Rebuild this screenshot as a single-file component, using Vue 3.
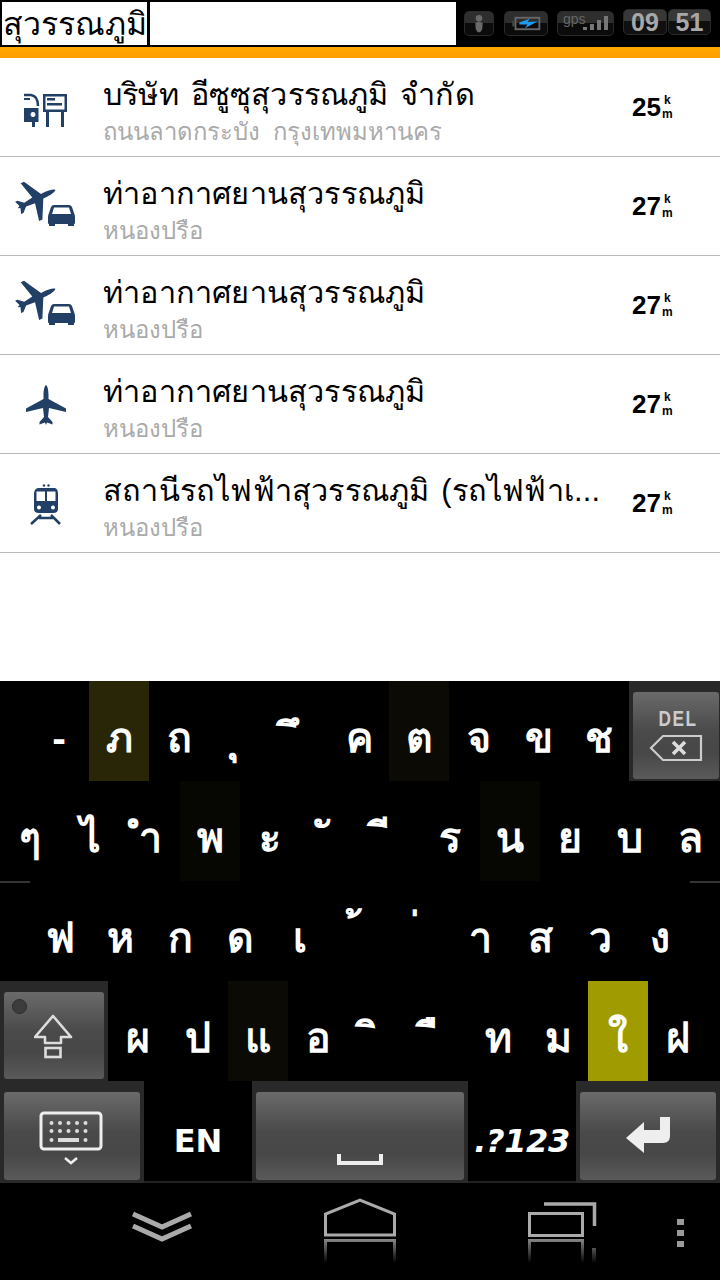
<script setup>
const rows = [
  { icon: "station", name: "บริษัท อีซูซุสุวรรณภูมิ จำกัด", sub: "ถนนลาดกระบัง  กรุงเทพมหานคร", dist: "25" },
  { icon: "planecar", name: "ท่าอากาศยานสุวรรณภูมิ", sub: "หนองปรือ", dist: "27" },
  { icon: "planecar", name: "ท่าอากาศยานสุวรรณภูมิ", sub: "หนองปรือ", dist: "27" },
  { icon: "plane", name: "ท่าอากาศยานสุวรรณภูมิ", sub: "หนองปรือ", dist: "27" },
  { icon: "train", name: "สถานีรถไฟฟ้าสุวรรณภูมิ (รถไฟฟ้าเ...", sub: "หนองปรือ", dist: "27" },
];

const planePath =
  "M0,-20 C1.5,-19 2.5,-15 2.5,-10 L2.5,-6 L20,3.5 L20,7 L3,3 L2,12 L6.5,17 L6.5,19.5 L1,17.5 L0,20 L-1,17.5 L-6.5,19.5 L-6.5,17 L-2,12 L-3,3 L-20,7 L-20,3.5 L-2.5,-6 L-2.5,-10 C-2.5,-15 -1.5,-19 0,-20 Z";

// combining marks have no advance of their own, so pad them with nbsp
const mark = (t) => `\u00a0${t}\u00a0`;

const row1 = [
  { t: "-" }, { t: "ภ", c: "hl-a" }, { t: "ถ" }, { t: mark("ุ") }, { t: mark("ึ") },
  { t: "ค" }, { t: "ต", c: "hl-b" }, { t: "จ" }, { t: "ข" }, { t: "ช" },
];
const row2 = [
  { t: "ๆ" }, { t: "ไ" }, { t: "ำ" }, { t: "พ", c: "hl-c" }, { t: "ะ" }, { t: mark("ั") },
  { t: mark("ี") }, { t: "ร" }, { t: "น", c: "hl-c" }, { t: "ย" }, { t: "บ" }, { t: "ล" },
];
const row3 = ["ฟ", "ห", "ก", "ด", "เ", mark("้"), mark("่"), "า", "ส", "ว", "ง"].map((t) => ({ t }));
const row4 = [
  { t: "ผ" }, { t: "ป" }, { t: "แ", c: "hl-b" }, { t: "อ" }, { t: mark("ิ") },
  { t: mark("ื") }, { t: "ท" }, { t: "ม" }, { t: "ใ", c: "hl-d" }, { t: "ฝ" },
];
</script>

<template>
  <div class="page">
    <div class="top">
      <div class="search">สุวรรณภูมิ<span class="caret"></span></div>
      <div class="status">
        <div class="sbox person">
          <svg width="30" height="25" viewBox="0 0 30 25">
            <circle cx="15" cy="7" r="3.5" fill="#6a6a6a" />
            <path d="M11,12 Q15,10 19,12 L18.5,18 Q17,22 15,22 Q13,22 11.5,18 Z" fill="#6a6a6a" />
          </svg>
        </div>
        <div class="sbox battery">
          <svg width="44" height="25" viewBox="0 0 44 25">
            <rect x="11" y="6.5" width="25" height="12" fill="none" stroke="#666" stroke-width="2" />
            <rect x="7.5" y="9.5" width="3" height="6" fill="#444" />
            <path d="M15,11.5 L26,7.5 L23.5,11 L34,10.5 L21,17.5 L23.5,13.5 L15,13.5 Z" fill="#1e9cf0" />
          </svg>
        </div>
        <div class="sbox gps">
          <span class="gps-text">gps</span>
          <svg width="30" height="25" viewBox="0 0 30 25">
            <rect x="2" y="16" width="4" height="3" fill="#777" />
            <rect x="9" y="13" width="4" height="6" fill="#777" />
            <rect x="16" y="9" width="4" height="10" fill="#777" />
            <rect x="23" y="5" width="4" height="14" fill="#777" />
          </svg>
        </div>
        <div class="sbox clock">09</div>
        <div class="sbox clock clock-min">51</div>
      </div>
    </div>
    <div class="orange"></div>

    <div class="list">
      <div v-for="(r, i) in rows" :key="i" class="row">
        <svg class="poi" width="103" height="98" viewBox="0 0 103 98">
          <g v-if="r.icon === 'station'" fill="#223f66">
            <path d="M24,37 L31,37 Q38,38 38,48" fill="none" stroke="#223f66" stroke-width="2.5" />
            <path d="M24,41 L30,41" fill="none" stroke="#223f66" stroke-width="2" />
            <path fill-rule="evenodd" d="M24,50 L38.5,50 L38.5,64 L35,64 L35,69 L32,69 L32,64 L24,64 Z M33,54 a2.5,2.5 0 1,0 0.01,0 Z" />
            <path fill-rule="evenodd" d="M43,36 L67,36 L67,54 L64,54 L64,69 L61,69 L61,54 L49,54 L49,69 L46,69 L46,54 L43,54 Z M45.5,38.5 L45.5,51.5 L64.5,51.5 L64.5,38.5 Z" />
            <rect x="47" y="40" width="8" height="2.5" />
            <rect x="47" y="45" width="15" height="2.5" />
          </g>
          <g v-else-if="r.icon === 'planecar'" fill="#223f66">
            <path :d="planePath" transform="translate(36.5 42) rotate(64) scale(1.05)" />
            <path fill-rule="evenodd" d="M54,48 L69,48 Q71,48 72,50 L74,56 Q75,58 75,60 L75,66 Q75,67 74,67 L74,69 L68,69 L68,67 L55,67 L55,69 L49,69 L49,67 Q48,67 48,66 L48,60 Q48,58 49,56 L51,50 Q52,48 54,48 Z M54,50.5 L52,57 L71,57 L69,50.5 Z" />
          </g>
          <g v-else-if="r.icon === 'plane'" fill="#223f66">
            <path :d="planePath" transform="translate(46 50)" />
          </g>
          <g v-else fill="#223f66">
            <circle cx="44" cy="31.5" r="1.2" />
            <circle cx="48.5" cy="31.5" r="1.2" />
            <path fill-rule="evenodd" d="M38,34 L55,34 Q58,35 58,40 L58,55 Q58,59 53,59 L39,59 Q34,59 34,55 L34,40 Q34,35 38,34 Z M36.5,37.5 L36.5,47 L45,47 L45,37.5 Z M47,37.5 L47,47 L55.5,47 L55.5,37.5 Z M39,51.5 a2,2 0 1,0 0.01,0 Z M53,51.5 a2,2 0 1,0 0.01,0 Z" />
            <path d="M41,61 L31,70 M51,61 L60,70 M39,64 L53,64" fill="none" stroke="#223f66" stroke-width="2.5" />
          </g>
        </svg>
        <div class="texts">
          <div class="name">{{ r.name }}</div>
          <div class="sub">{{ r.sub }}</div>
        </div>
        <div class="dist">
          <span class="num">{{ r.dist }}</span>
          <span class="unit"><span>k</span><span>m</span></span>
        </div>
      </div>
    </div>

    <div class="kbd">
      <div class="krow krow1">
        <div v-for="(k, i) in row1" :key="i" class="key" :class="k.c">{{ k.t }}</div>
        <div class="fn fn-del">
          <div class="btn del-btn">
            <span class="del-text">DEL</span>
            <svg width="54" height="28" viewBox="0 0 54 28">
              <path d="M14,2 L52,2 L52,26 L14,26 L2,14 Z" fill="none" stroke="#ccc" stroke-width="2.2" />
              <path d="M24,8 L36,20 M36,8 L24,20" stroke="#ddd" stroke-width="3.5" />
            </svg>
          </div>
        </div>
      </div>
      <div class="krow krow2">
        <div v-for="(k, i) in row2" :key="i" class="key" :class="k.c">{{ k.t }}</div>
      </div>
      <div class="krow krow3">
        <div v-for="(k, i) in row3" :key="i" class="key">{{ k.t }}</div>
      </div>
      <div class="krow krow4">
        <div class="fn fn-shift">
          <div class="btn shift-btn">
            <span class="led"></span>
            <svg width="40" height="46" viewBox="0 0 40 46">
              <path d="M19,2 L37,23 L27,23 L27,29 L11,29 L11,23 L1,23 Z" fill="none" stroke="#ddd" stroke-width="2.6" stroke-linejoin="round" />
              <rect x="11.5" y="34" width="15" height="9" fill="none" stroke="#ddd" stroke-width="2.6" />
            </svg>
          </div>
        </div>
        <div v-for="(k, i) in row4" :key="i" class="key" :class="k.c">{{ k.t }}</div>
      </div>
      <div class="krow krow5">
        <div class="fn fn-kb">
          <div class="btn">
            <svg width="70" height="60" viewBox="0 0 70 60">
              <rect x="4" y="2" width="60" height="36" rx="3" fill="none" stroke="#eee" stroke-width="3" />
              <g fill="#ddd">
                <circle v-for="n in 5" :key="'a' + n" :cx="6 + n * 8.5" cy="12" r="2" />
                <circle v-for="n in 5" :key="'b' + n" :cx="6 + n * 8.5" cy="20" r="2" />
                <circle cx="14.5" cy="29" r="2" />
                <circle cx="48.5" cy="29" r="2" />
                <rect x="21" y="27" width="21" height="4" />
              </g>
              <path d="M28,47 L34,52 L40,47" fill="none" stroke="#eee" stroke-width="2.5" />
            </svg>
          </div>
        </div>
        <div class="label en">EN</div>
        <div class="fn fn-space">
          <div class="btn">
            <svg class="space-ico" width="50" height="14" viewBox="0 0 50 14">
              <path d="M4,1 L4,10 L46,10 L46,1" fill="none" stroke="#eee" stroke-width="4" />
            </svg>
          </div>
        </div>
        <div class="label sym">.?123</div>
        <div class="fn fn-enter">
          <div class="btn">
            <svg width="48" height="40" viewBox="0 0 48 40">
              <path d="M2,22 L20,6 L20,14 L36,14 L36,1 L46,1 L46,20 Q46,27 39,27 L20,27 L20,37 Z" fill="#eee" />
            </svg>
          </div>
        </div>
      </div>
    </div>

    <div class="nav">
      <svg width="80" height="96" viewBox="120 1184 80 96">
        <path d="M133,1215 L162,1228 L191,1215 M133,1227 L162,1240 L191,1227" fill="none" stroke="#aaa" stroke-width="5" />
      </svg>
      <svg class="nav-home" width="100" height="96" viewBox="310 1184 100 96">
        <defs>
          <linearGradient id="fade" x1="0" y1="0" x2="0" y2="1">
            <stop offset="0" stop-color="#aaa" stop-opacity="0.8" />
            <stop offset="1" stop-color="#aaa" stop-opacity="0" />
          </linearGradient>
        </defs>
        <path d="M325.5,1236 L325.5,1215 L360,1201 L394.5,1215 L394.5,1236 Z" fill="none" stroke="#aaa" stroke-width="3" />
        <path d="M324,1240 L396,1240 L396,1264 L393,1264 L393,1243 L327,1243 L327,1264 L324,1264 Z" fill="url(#fade)" />
      </svg>
      <svg class="nav-recent" width="80" height="96" viewBox="520 1184 80 96">
        <rect x="529.5" y="1214.5" width="53" height="22" fill="none" stroke="#aaa" stroke-width="3" />
        <path d="M544,1205 L594.5,1205 L594.5,1227" fill="none" stroke="#aaa" stroke-width="3.5" />
        <path d="M528,1240 L584,1240 L584,1264 L581,1264 L581,1243 L531,1243 L531,1264 L528,1264 Z M592,1249 L596,1249 L596,1264 L592,1264 Z" fill="url(#fade)" />
      </svg>
      <div class="dots"><span></span><span></span><span></span></div>
    </div>
  </div>
</template>

<style>
body {
  background: #000;
}
</style>

<style scoped>
.page {
  width: 720px;
  height: 1280px;
  background: #fff;
  font-family: "Liberation Sans", "Noto Sans", sans-serif;
  overflow: hidden;
}

.top {
  height: 47px;
  background: #000;
  display: flex;
}
.search {
  width: 456px;
  height: 47px;
  box-sizing: border-box;
  background: #fff;
  border: 2px solid #000;
  border-right: 0;
  padding-left: 1px;
  font-size: 32px;
  color: #000;
  display: flex;
  align-items: center;
}
.caret {
  width: 3px;
  height: 43px;
  background: #000;
}
.status {
  display: flex;
  align-items: flex-start;
  padding-top: 11px;
  padding-left: 8px;
}
.sbox {
  height: 25px;
  box-sizing: border-box;
  border: 1px solid #2a2a2a;
  border-radius: 5px;
  background: linear-gradient(#2e2e2e 0, #2e2e2e 50%, #0b0b0b 50%, #0b0b0b 100%);
  display: flex;
  align-items: center;
  justify-content: center;
  overflow: hidden;
}
.person { width: 30px; }
.battery { width: 44px; margin-left: 10px; }
.gps { width: 57px; margin-left: 9px; position: relative; }
.gps svg { position: absolute; right: 2px; top: -1px; }
.gps-text {
  position: absolute;
  left: 5px;
  top: -1px;
  font-size: 14px;
  color: #666;
}
.clock {
  width: 44px;
  height: 26px;
  margin-left: 9px;
  margin-top: -2px;
  font-size: 25px;
  font-weight: 700;
  color: #a8a8a8;
  background: linear-gradient(#383838 0, #383838 45%, #101010 45%, #101010 100%);
}
.clock-min { width: 43px; margin-left: 1px; }

.orange {
  height: 11px;
  background: linear-gradient(#ffa800, #ff9f00);
}

.list {
  height: 623px;
  background: #fff;
}
.row {
  height: 99px;
  box-sizing: border-box;
  border-bottom: 1px solid #bbb;
  display: flex;
}
.poi {
  flex: none;
}
.texts {
  width: 529px;
  padding-top: 13px;
  white-space: nowrap;
}
.name {
  font-size: 30.7px;
  line-height: 48px;
  letter-spacing: 0.2px;
  word-spacing: 3px;
  color: #000;
}
.sub {
  font-size: 23.9px;
  line-height: 26px;
  color: #aaa;
  white-space: pre;
}
.dist {
  display: flex;
  align-items: center;
  color: #000;
  font-weight: 700;
}
.num {
  font-size: 26px;
}
.unit {
  display: flex;
  flex-direction: column;
  font-size: 12px;
  line-height: 14px;
  margin-left: 1px;
  align-items: center;
}

.kbd {
  height: 502px;
  background: #000;
}
.krow {
  height: 100px;
  display: flex;
}
.krow1 { padding-left: 29px; }
.krow3 {
  padding-left: 30px;
  background:
    linear-gradient(#333, #333) 0 0 / 30px 2px no-repeat,
    linear-gradient(#333, #333) 100% 0 / 30px 2px no-repeat;
}
.krow5 { height: 102px; }
.key {
  width: 60px;
  height: 100px;
  color: #fff;
  font-size: 41px;
  font-weight: 700;
  line-height: 114px;
  text-align: center;
  white-space: pre;
}
.hl-a { background: #292608; }
.hl-b { background: #0b0a04; }
.hl-c { background: #060603; }
.hl-d { background: #a09c00; }

.fn {
  background: #292929;
  box-sizing: border-box;
  padding: 11px 4px 2px;
  height: 100%;
}
.fn-del { width: 91px; padding-right: 1px; }
.fn-shift { width: 108px; }
.fn-kb { width: 144px; }
.fn-space { width: 216px; }
.fn-enter { width: 144px; }
.krow5 .fn { padding-bottom: 3px; }
.btn {
  height: 100%;
  border-radius: 3px;
  background: linear-gradient(#6a6a6a 0, #4a4a4a 45%, #474747 70%, #5a5a5a 100%);
  display: flex;
  flex-direction: column;
  align-items: center;
  justify-content: center;
  position: relative;
}
.del-btn {
  justify-content: flex-start;
  padding-top: 18px;
  box-sizing: border-box;
  gap: 6px;
}
.del-text {
  font-size: 22px;
  line-height: 18px;
  font-weight: 700;
  letter-spacing: 2px;
  color: #ccc;
  margin-left: 4px;
  transform: scaleX(0.78);
}
.shift-btn {
  padding-top: 3px;
  box-sizing: border-box;
}
.led {
  position: absolute;
  left: 8px;
  top: 7px;
  width: 13px;
  height: 13px;
  border-radius: 50%;
  background: #3c3c3c;
  border: 1px solid #2c2c2c;
}
.fn-kb .btn {
  padding-top: 10px;
  box-sizing: border-box;
}
.space-ico {
  margin-top: 48px;
}
.label {
  height: 102px;
  box-sizing: border-box;
  color: #fff;
  font-family: "DejaVu Sans", sans-serif;
  font-weight: 700;
  text-align: center;
  line-height: 120px;
  border-bottom: 2px solid #222;
}
.en {
  width: 108px;
  font-size: 32px;
}
.sym {
  width: 108px;
  font-size: 32px;
  font-style: italic;
  letter-spacing: -0.4px;
}

.nav {
  height: 97px;
  background: #000;
  display: flex;
  padding-left: 120px;
}
.nav-home { margin-left: 110px; }
.nav-recent { margin-left: 110px; }
.dots {
  margin-left: 77px;
  padding-top: 36px;
  display: flex;
  flex-direction: column;
  gap: 5px;
}
.dots span {
  display: block;
  width: 7px;
  height: 6px;
  background: #9a9a9a;
}
</style>
